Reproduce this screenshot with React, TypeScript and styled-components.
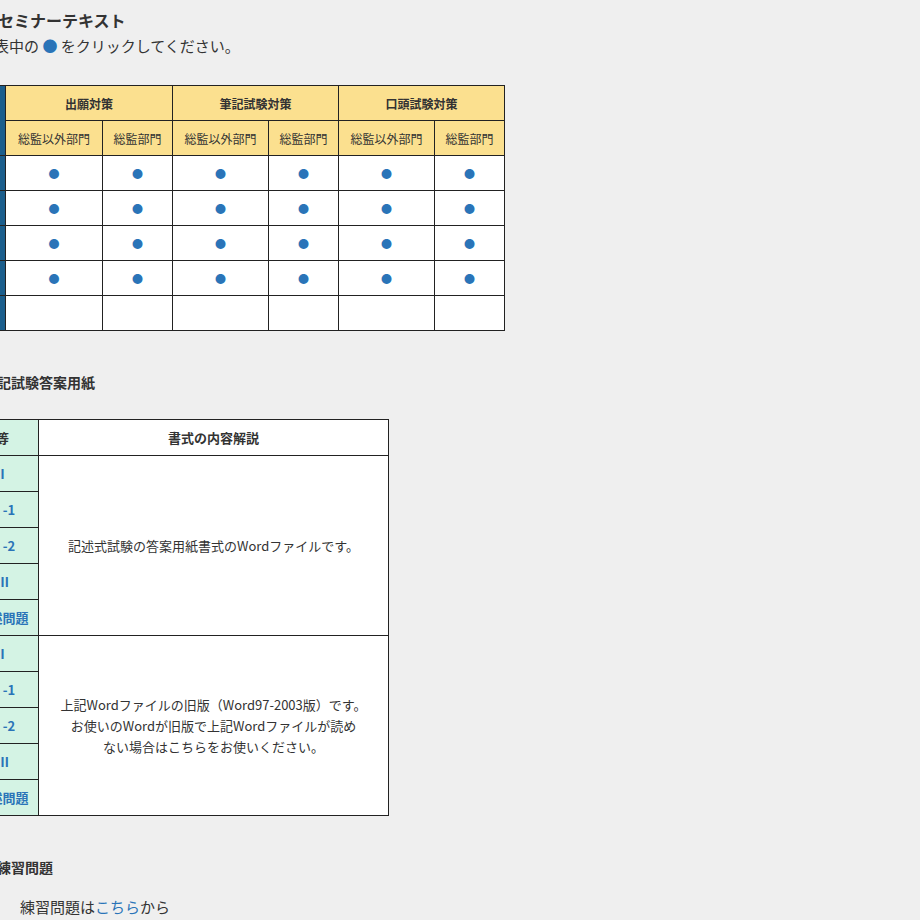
import React from "react";
import styled, { createGlobalStyle } from "styled-components";

const Global = createGlobalStyle`
  html, body { margin: 0; padding: 0; overflow: hidden; }
  body {
    background: #efefef;
    color: #333;
    font-family: "Noto Sans CJK JP", "Noto Sans", sans-serif;
  }
`;

const Page = styled.div`
  margin-left: -200px;
  padding-top: 8px;
  width: 1200px;
`;

const Block = styled.div<{ $indent: number; $top: number }>`
  padding-left: ${(p) => p.$indent}px;
  margin-top: ${(p) => p.$top}px;
`;

const Title = styled.div<{ $size: number }>`
  font-size: ${(p) => p.$size}px;
  font-weight: bold;
  line-height: 24px;
  color: #333;
`;

const Text = styled.div`
  font-size: 15px;
  line-height: 24px;
`;

const Dot = styled.span`
  color: #2a74b8;
`;

const Link = styled.a`
  color: #2a74b8;
  text-decoration: none;
`;

const Table = styled.table`
  border-collapse: collapse;
  table-layout: fixed;
  width: 600px;
  background: #fff;
  font-size: 12px;
  td, th { border: 1px solid #222; padding: 0; text-align: center; }
`;

const Col = styled.col<{ $w: number }>`
  width: ${(p) => p.$w}px;
`;

const Side = styled.td`
  background: #1b5e8c;
`;

const HeadCell = styled.th<{ $sub?: boolean }>`
  background: #fbe08f;
  height: 34px;
  font-weight: ${(p) => (p.$sub ? "normal" : "bold")};
  color: #333;
  white-space: nowrap;
  overflow: hidden;
`;

const DotCell = styled.td`
  height: 34px;
  color: #2a74b8;
  font-size: 11px;
`;

const Table2 = styled.table`
  border-collapse: collapse;
  table-layout: fixed;
  width: 474px;
  background: #fff;
  font-size: 13px;
  td, th { border: 1px solid #222; padding: 0; text-align: center; }
`;

const KindHead = styled.th`
  background: #d4f3e4;
  height: 35px;
  font-weight: bold;
  white-space: nowrap;
`;

const DescHead = styled.th`
  font-weight: bold;
  color: #333;
`;

const Kind = styled.td`
  background: #d4f3e4;
  height: 35px;
  font-weight: bold;
  color: #2a74b8;
  white-space: nowrap;
`;

const Desc = styled.td`
  color: #333;
  line-height: 21px;
  padding: 0 8px !important;
`;

const widths = [97, 70, 96, 70, 96, 70];
const kinds = ["選択科目Ⅰ", "選択科目Ⅱ-1", "選択科目Ⅱ-2", "選択科目Ⅲ", "筆記試験論述問題"];

export default function App() {
  return (
    <Page>
      <Global />
      <Block $indent={198} $top={0}><Title $size={16}>セミナーテキスト</Title></Block>
      <Block $indent={194} $top={2}><Text>表中の <Dot>●</Dot> をクリックしてください。</Text></Block>
      <Block $indent={105} $top={27}>
        <Table>
          <colgroup>
            <Col $w={100} />
            {widths.map((w, i) => <Col key={i} $w={w} />)}
          </colgroup>
          <tbody>
            <tr>
              <Side rowSpan={2} />
              <HeadCell colSpan={2}>出願対策</HeadCell>
              <HeadCell colSpan={2}>筆記試験対策</HeadCell>
              <HeadCell colSpan={2}>口頭試験対策</HeadCell>
            </tr>
            <tr>
              {widths.map((_, i) => (
                <HeadCell key={i} $sub>{i % 2 === 0 ? "総監以外部門" : "総監部門"}</HeadCell>
              ))}
            </tr>
            {[0, 1, 2, 3, 4].map((r) => (
              <tr key={r}>
                <Side />
                {widths.map((_, i) => (
                  <DotCell key={i}>{r < 4 ? "●" : ""}</DotCell>
                ))}
              </tr>
            ))}
          </tbody>
        </Table>
      </Block>
      <Block $indent={183} $top={39}><Title $size={14}>筆記試験答案用紙</Title></Block>
      <Block $indent={114} $top={25}>
        <Table2>
          <colgroup>
            <Col $w={124} />
            <Col $w={350} />
          </colgroup>
          <tbody>
            <tr>
              <KindHead>試験科目等</KindHead>
              <DescHead>書式の内容解説</DescHead>
            </tr>
            {[0, 1].map((g) =>
              kinds.map((k, i) => (
                <tr key={`${g}-${i}`}>
                  <Kind>{k}</Kind>
                  {i === 0 && (
                    <Desc rowSpan={5}>
                      {g === 0 ? (
                        "記述式試験の答案用紙書式のWordファイルです。"
                      ) : (
                        <>上記Wordファイルの旧版（Word97-2003版）です。<br />お使いのWordが旧版で上記Wordファイルが読め<br />ない場合はこちらをお使いください。</>
                      )}
                    </Desc>
                  )}
                </tr>
              ))
            )}
          </tbody>
        </Table2>
      </Block>
      <Block $indent={197} $top={39}><Title $size={14}>練習問題</Title></Block>
      <Block $indent={220} $top={16}><Text>練習問題は<Link href="#">こちら</Link>から</Text></Block>
    </Page>
  );
}
